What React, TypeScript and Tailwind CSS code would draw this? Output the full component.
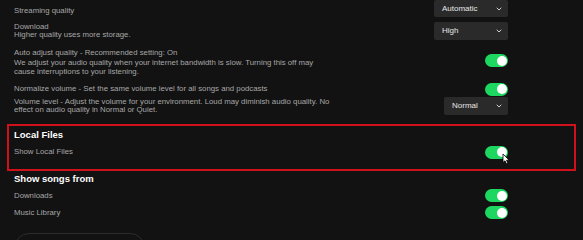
import { ChevronDown } from "lucide-react";

const Select = ({ label, w, h }: { label: string; w: string; h: string }) => (
  <div
    className={`${w} ${h} flex items-center justify-between bg-[#2a2a2a] rounded-[2px] pl-[8px] pr-[5px] text-[#e6e6e6] text-[8px] shrink-0`}
  >
    <span>{label}</span>
    <ChevronDown size={8} strokeWidth={3} className="text-[#cfcfcf]" />
  </div>
);

const Toggle = () => (
  <div className="w-[23px] h-[13px] rounded-full bg-[#1ed760] flex items-center justify-end pr-[1.5px] shrink-0">
    <div className="w-[10px] h-[10px] rounded-full bg-white" />
  </div>
);

const App = () => {
  return (
    <div className="w-[583px] h-[240px] overflow-hidden bg-[#121212] font-['Liberation_Sans',Arial,sans-serif] text-[7.8px] text-[#a7a7a7]">
      <div className="pl-[14px] pr-[75px]">
        <div className="flex justify-between h-[17px]">
          <span className="mt-[5.5px] leading-[9px]">Streaming quality</span>
          <Select label="Automatic" w="w-[74px]" h="h-[17px]" />
        </div>

        <div className="flex justify-between h-[18px] mt-[5px]">
          <div className="leading-[8px] pt-[1px]">
            <div>Download</div>
            <div>Higher quality uses more storage.</div>
          </div>
          <Select label="High" w="w-[74px]" h="h-[18px]" />
        </div>

        <div className="flex justify-between mt-[7.5px]">
          <div className="leading-[9px]">
            <div>Auto adjust quality - Recommended setting: On</div>
            <div className="mt-[1px]">
              We adjust your audio quality when your internet bandwidth is slow. Turning this off may
              <br />
              cause interruptions to your listening.
            </div>
          </div>
          <div className="mt-[6.5px]">
            <Toggle />
          </div>
        </div>

        <div className="flex justify-between items-center h-[12px] mt-[7.5px]">
          <span>Normalize volume - Set the same volume level for all songs and podcasts</span>
          <Toggle />
        </div>

        <div className="flex justify-between h-[18px] mt-[2px]">
          <div className="leading-[8.5px] pt-[0.5px]">
            <div>Volume level - Adjust the volume for your environment. Loud may diminish audio quality. No</div>
            <div>effect on audio quality in Normal or Quiet.</div>
          </div>
          <Select label="Normal" w="w-[64px]" h="h-[18px]" />
        </div>

        <div className="relative mt-[9px] -ml-[7px] -mr-[68px] h-[47px] border-2 border-[#d0111b] pl-[5px] pr-[66px] pt-[2.5px]">
          <div className="text-[9.5px] leading-[12px] font-bold text-white">Local Files</div>
          <div className="flex justify-between items-center h-[13px] mt-[5px]">
            <span>Show Local Files</span>
            <Toggle />
          </div>
          <svg
            className="absolute left-[493px] top-[27px]"
            width="9"
            height="12"
            viewBox="0 0 9 12"
          >
            <path
              d="M1 1 L1 9.5 L3 7.8 L4.6 11 L6 10.3 L4.5 7.2 L7.2 7.2 Z"
              fill="#fff"
              stroke="#000"
              strokeWidth="0.8"
              strokeLinejoin="round"
            />
          </svg>
        </div>

        <div className="text-[9.5px] leading-[12px] font-bold text-white mt-[1.5px]">
          Show songs from
        </div>
        <div className="flex justify-between items-center h-[12px] mt-[5px]">
          <span>Downloads</span>
          <Toggle />
        </div>
        <div className="flex justify-between items-center h-[12px] mt-[5px]">
          <span>Music Library</span>
          <Toggle />
        </div>

        <div className="mt-[14px] w-[131px] h-[30px] rounded-full border border-[#2c2c2c]" />
      </div>
    </div>
  );
};

export default App;
